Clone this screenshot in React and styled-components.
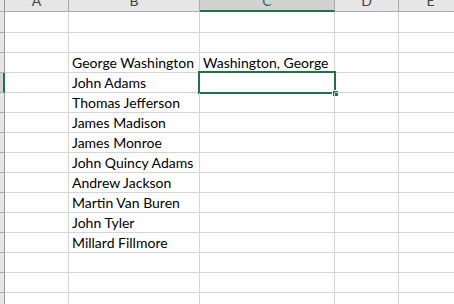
import React from "react";
import styled, { createGlobalStyle } from "styled-components";

const GlobalStyle = createGlobalStyle`
  html, body {
    margin: 0;
    padding: 0;
    background: #ffffff;
    overflow: hidden;
  }
`;

const Sheet = styled.div`
  width: 454px;
  height: 304px;
  overflow: hidden;
  display: grid;
  grid-template-columns: 5px 64px 131px 135px 64px 64px;
  grid-auto-rows: 20px;
  grid-template-rows: 12px 21px;
  font-family: Lato, "Liberation Sans", sans-serif;
  font-size: 14px;
  color: #000;
`;

const Corner = styled.div`
  box-sizing: border-box;
  background: #e6e6e6;
  border-right: 1px solid #9b9b9b;
  border-bottom: 1px solid #ababab;
`;

const ColHeader = styled.div`
  box-sizing: border-box;
  display: flex;
  justify-content: center;
  align-items: flex-end;
  overflow: hidden;
  background: ${({ $active }) => ($active ? "#d2d2d2" : "#e6e6e6")};
  border-right: 1px solid #ababab;
  border-bottom: ${({ $active }) =>
    $active ? "2px solid #217346" : "1px solid #ababab"};
  color: ${({ $active }) => ($active ? "#217346" : "#444")};
`;

const HeaderLabel = styled.span`
  display: block;
  line-height: 14px;
  margin-bottom: ${({ $active }) => ($active ? "2px" : "3px")};
`;

const RowHeader = styled.div`
  box-sizing: border-box;
  background: ${({ $active }) => ($active ? "#d2d2d2" : "#e6e6e6")};
  border-right: ${({ $active }) =>
    $active ? "2px solid #217346" : "1px solid #9b9b9b"};
  border-bottom: 1px solid #ababab;
`;

const Cell = styled.div`
  box-sizing: border-box;
  position: relative;
  display: flex;
  align-items: flex-end;
  padding: 0 3px;
  white-space: nowrap;
  border-right: 1px solid #d4d4d4;
  border-bottom: 1px solid #d4d4d4;
  line-height: 18px;
`;

const Selection = styled.div`
  position: absolute;
  left: -2px;
  top: -2px;
  width: 138px;
  height: 23px;
  box-sizing: border-box;
  border: 2px solid #217346;
  pointer-events: none;
`;

const FillHandle = styled.div`
  position: absolute;
  right: -4px;
  bottom: -4px;
  width: 5px;
  height: 5px;
  background: #217346;
  border: 1px solid #ffffff;
  border-right: none;
  border-bottom: none;
`;

const columns = ["A", "B", "C", "D", "E"];

const rows = [
  ["", "", "", "", ""],
  ["", "", "", "", ""],
  ["", "George Washington", "Washington, George", "", ""],
  ["", "John Adams", "", "", ""],
  ["", "Thomas Jefferson", "", "", ""],
  ["", "James Madison", "", "", ""],
  ["", "James Monroe", "", "", ""],
  ["", "John Quincy Adams", "", "", ""],
  ["", "Andrew Jackson", "", "", ""],
  ["", "Martin Van Buren", "", "", ""],
  ["", "John Tyler", "", "", ""],
  ["", "Millard Fillmore", "", "", ""],
  ["", "", "", "", ""],
  ["", "", "", "", ""],
  ["", "", "", "", ""],
];

const activeRow = 3;
const activeCol = 2;

export default function App() {
  return (
    <>
      <GlobalStyle />
      <Sheet>
        <Corner />
        {columns.map((c, i) => (
          <ColHeader key={c} $active={i === activeCol}>
            <HeaderLabel $active={i === activeCol}>{c}</HeaderLabel>
          </ColHeader>
        ))}
        {rows.map((row, r) => (
          <React.Fragment key={r}>
            <RowHeader $active={r === activeRow} />
            {row.map((value, c) => (
              <Cell key={c}>
                {value}
                {r === activeRow && c === activeCol && (
                  <Selection>
                    <FillHandle />
                  </Selection>
                )}
              </Cell>
            ))}
          </React.Fragment>
        ))}
      </Sheet>
    </>
  );
}
